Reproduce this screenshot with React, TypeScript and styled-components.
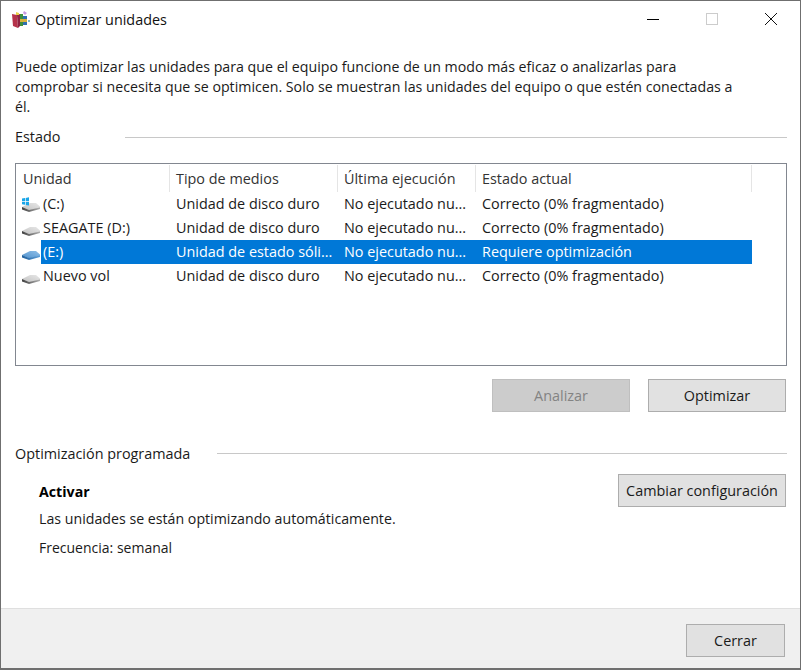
import React from "react";
import styled, { createGlobalStyle } from "styled-components";

const Global = createGlobalStyle`
  html, body { margin: 0; padding: 0; background: #fff; }
  body { font-family: "Open Sans", "Noto Sans", "Liberation Sans", sans-serif; font-size: 14.4px; color: #1a1a1a; }
`;

const Window = styled.div`
  width: 801px; height: 670px; box-sizing: border-box;
  border: 1px solid #6f6f6f; border-width: 1px 1px 2px 1px;
  background: #fff; display: flex; flex-direction: column; overflow: hidden;
`;
const TitleBar = styled.div`
  height: 38px; display: flex; align-items: center; padding-left: 10px; padding-bottom: 2px; box-sizing: border-box; flex: none;
`;
const TitleText = styled.span`
  margin-left: 4px; color: #111;
`;
const WinControls = styled.div`
  margin-left: auto; display: flex; align-items: center;
`;
const WinButton = styled.div`
  width: 59px; height: 36px; display: flex; align-items: center; justify-content: center;
`;
const Content = styled.div`
  flex: 1; padding: 18px 13px 0 14px; display: flex; flex-direction: column;
`;
const Intro = styled.p`
  margin: 0; line-height: 20px; width: 730px; font-size: 14.2px;
`;
const SectionHead = styled.div<{ $mt: number }>`
  display: flex; align-items: center; margin-top: ${p => p.$mt}px; height: 20px;
`;
const SectionLabel = styled.span<{ $gap: number }>`
  margin-right: ${p => p.$gap}px;
`;
const SectionRule = styled.div<{ $drop?: number }>`
  flex: 1; height: 1px; background: #c8c8c8; margin-top: ${p => p.$drop ?? 0}px;
`;
const ListBox = styled.div`
  margin-top: 17px; height: 203px; box-sizing: border-box; border: 1px solid #828790; padding: 1px 0 0 1px;
`;
const Row = styled.div`
  display: grid; grid-template-columns: 153px 168px 138px 276px; height: 24px; align-items: center;
`;
const HeadRow = styled(Row)`
  height: 27px;
`;
const HeadCell = styled.div`
  height: 27px; line-height: 27px; padding-left: 6px; border-right: 1px solid #e5e5e5; box-sizing: border-box;
  color: #333; white-space: nowrap;
`;
const NameCell = styled.div`
  display: flex; align-items: center; height: 24px; padding-left: 4px;
`;
const NameText = styled.div<{ $sel?: boolean }>`
  flex: 1; height: 24px; line-height: 24px; padding-left: 2px; white-space: nowrap;
  ${p => p.$sel && "background: #0078d7; color: #fff;"}
`;
const Cell = styled.div<{ $sel?: boolean }>`
  height: 24px; line-height: 24px; padding-left: 6px; white-space: nowrap; overflow: hidden;
  ${p => p.$sel && "background: #0078d7; color: #fff;"}
`;
const Buttons = styled.div`
  display: flex; justify-content: flex-end; gap: 18px; margin-top: 13px; padding-right: 1px;
`;
const Btn = styled.button<{ $w: number; $disabled?: boolean }>`
  width: ${p => p.$w}px; height: 33px; font: inherit; padding: 0;
  background: ${p => p.$disabled ? "#cccccc" : "#e1e1e1"};
  border: 1px solid ${p => p.$disabled ? "#bfbfbf" : "#adadad"};
  color: ${p => p.$disabled ? "#838383" : "#1a1a1a"};
`;
const Schedule = styled.div`
  display: flex; justify-content: space-between; padding: 11px 1px 0 24px;
`;
const ScheduleInfo = styled.div`
  display: flex; flex-direction: column;
`;
const Strong = styled.div`
  font-weight: 700; font-size: 14.2px; line-height: 20px; margin-top: 8px; color: #000;
`;
const Info = styled.div<{ $mt: number; $size: number }>`
  line-height: 20px; font-size: ${p => p.$size}px; margin-top: ${p => p.$mt}px;
`;
const Footer = styled.div`
  flex: none; height: 60px; box-sizing: border-box; background: #f0f0f0; border-top: 1px solid #dfdfdf;
  display: flex; justify-content: flex-end; align-items: flex-start; padding: 15px 15px 0 0;
`;

const AppIcon = () => (
  <svg width="20" height="20" viewBox="0 0 20 20">
    <path d="M1 5l5 1 1 13-5-2z" fill="#b5324a" />
    <path d="M6 6l3-1v12l-2 2z" fill="#8e2140" />
    <path d="M9 5h3v12H9z" fill="#3f8f3c" />
    <path d="M12 7h4v9h-4z" fill="#2f6fb0" />
    <path d="M9 10h7v3H9z" fill="#d8b23c" />
    <path d="M13 2l3 2-2 2-2-2z" fill="#c89ae0" />
    <path d="M5 3l3 1v2H5z" fill="#e8d24a" />
    <circle cx="18" cy="12" r="1" fill="#5aa0b8" />
  </svg>
);

const Drive = ({ tone, win }: { tone: "gray" | "blue"; win?: boolean }) => {
  const blue = tone === "blue";
  return (
    <svg width="20" height="24" viewBox="0 0 20 24" style={{ flex: "none" }}>
      <defs>
        <linearGradient id={`top-${tone}`} x1="0" x2="1" y1="1" y2="0">
          <stop offset="0" stopColor={blue ? "#4f90cc" : "#c0c0c0"} />
          <stop offset="1" stopColor={blue ? "#8fbfe8" : "#e8e8e8"} />
        </linearGradient>
        <linearGradient id={`front-${tone}`} x1="0" x2="1" y1="0" y2="0">
          <stop offset="0" stopColor={blue ? "#1f5f9c" : "#3f3f3f"} />
          <stop offset="1" stopColor={blue ? "#5f9fd8" : "#b0b0b0"} />
        </linearGradient>
      </defs>
      <path d="M1 15 L9 11 H15 L19 14.5 V16 L8 18.5Z" fill={`url(#top-${tone})`} />
      <path d="M1 15 L8 18 L19 15.5 V17 L8 20 L1 17.5Z" fill={`url(#front-${tone})`} />
      {win && (
        <g fill="#19a5e8">
          <path d="M1 6.5 4 6v3H1z" /><path d="M4.7 5.9 8 5.3V9H4.7z" /><path d="M1 9.7h3v3l-3-.4z" /><path d="M4.7 9.7H8v3.8l-3.3-.6z" />
        </g>
      )}
    </svg>
  );
};

const drives = [
  { name: "(C:)", type: "Unidad de disco duro", state: "Correcto (0% fragmentado)", win: true },
  { name: "SEAGATE (D:)", type: "Unidad de disco duro", state: "Correcto (0% fragmentado)" },
  { name: "(E:)", type: "Unidad de estado sóli...", state: "Requiere optimización", sel: true },
  { name: "Nuevo vol", type: "Unidad de disco duro", state: "Correcto (0% fragmentado)" },
];

export default function App() {
  return (
    <Window>
      <Global />
      <TitleBar>
        <AppIcon />
        <TitleText>Optimizar unidades</TitleText>
        <WinControls>
          <WinButton>
            <svg width="12" height="12" viewBox="0 0 12 12"><path d="M0 6.5h12" stroke="#000" /></svg>
          </WinButton>
          <WinButton>
            <svg width="12" height="12" viewBox="0 0 12 12"><rect x=".5" y=".5" width="11" height="11" fill="none" stroke="#ccc" /></svg>
          </WinButton>
          <WinButton>
            <svg width="14" height="14" viewBox="0 0 14 14"><path d="M1 1l12 12M13 1L1 13" stroke="#111" /></svg>
          </WinButton>
        </WinControls>
      </TitleBar>
      <Content>
        <Intro>
          Puede optimizar las unidades para que el equipo funcione de un modo más eficaz o analizarlas para comprobar si necesita que se optimicen. Solo se muestran las unidades del equipo o que estén conectadas a él.
        </Intro>
        <SectionHead $mt={9}>
          <SectionLabel $gap={65}>Estado</SectionLabel>
          <SectionRule $drop={3} />
        </SectionHead>
        <ListBox>
          <HeadRow>
            <HeadCell>Unidad</HeadCell>
            <HeadCell>Tipo de medios</HeadCell>
            <HeadCell>Última ejecución</HeadCell>
            <HeadCell>Estado actual</HeadCell>
          </HeadRow>
          {drives.map(d => (
            <Row key={d.name}>
              <NameCell>
                <Drive tone={d.sel ? "blue" : "gray"} win={d.win} />
                <NameText $sel={d.sel}>{d.name}</NameText>
              </NameCell>
              <Cell $sel={d.sel}>{d.type}</Cell>
              <Cell $sel={d.sel}>No ejecutado nu...</Cell>
              <Cell $sel={d.sel}>{d.state}</Cell>
            </Row>
          ))}
        </ListBox>
        <Buttons>
          <Btn $w={138} $disabled>Analizar</Btn>
          <Btn $w={138}>Optimizar</Btn>
        </Buttons>
        <SectionHead $mt={31}>
          <SectionLabel $gap={27}>Optimización programada</SectionLabel>
          <SectionRule />
        </SectionHead>
        <Schedule>
          <ScheduleInfo>
            <Strong>Activar</Strong>
            <Info $mt={7} $size={14.2}>Las unidades se están optimizando automáticamente.</Info>
            <Info $mt={9} $size={14}>Frecuencia: semanal</Info>
          </ScheduleInfo>
          <Btn $w={168}>Cambiar configuración</Btn>
        </Schedule>
      </Content>
      <Footer>
        <Btn $w={99}>Cerrar</Btn>
      </Footer>
    </Window>
  );
}
